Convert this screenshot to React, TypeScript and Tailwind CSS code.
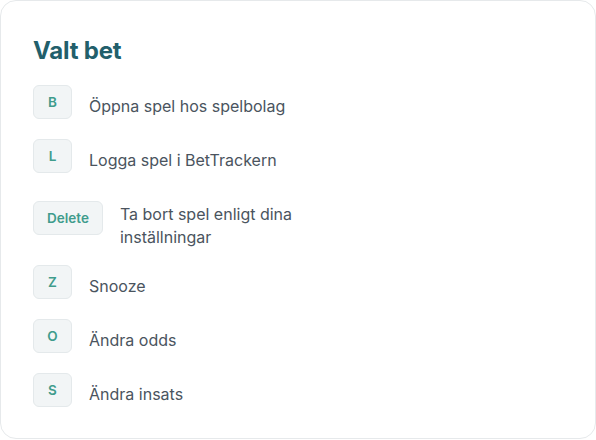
import React from "react";

type Row = { key: string; label: React.ReactNode; cls: string; textCls: string };

const rows: Row[] = [
  { key: "B", label: "Öppna spel hos spelbolag", cls: "", textCls: "pt-[9px]" },
  { key: "L", label: "Logga spel i BetTrackern", cls: "mt-5", textCls: "pt-[9px]" },
  {
    key: "Delete",
    label: (
      <>
        Ta bort spel enligt dina
        <br />
        inställningar
      </>
    ),
    cls: "mt-7",
    textCls: "pt-[2px] leading-[23px]",
  },
  { key: "Z", label: "Snooze", cls: "mt-4", textCls: "pt-[9px]" },
  { key: "O", label: "Ändra odds", cls: "mt-5", textCls: "pt-[9px]" },
  { key: "S", label: "Ändra insats", cls: "mt-5", textCls: "pt-[9px]" },
];

export default function App() {
  return (
    <div className="w-[596px] h-[440px] bg-white" style={{ fontFamily: "Inter, 'Noto Sans', sans-serif" }}>
      <div className="w-[596px] h-[439px] rounded-2xl border border-[#e6e9eb] bg-white px-8 pt-[34px]">
        <h1 className="text-[24px] leading-8 font-bold text-[#225f6b] tracking-[-0.2px]">Valt bet</h1>
        <div className="mt-[18px] flex flex-col">
          {rows.map((r) => (
            <div key={r.key} className={`flex items-start gap-[17px] ${r.cls}`}>
              <div className="h-[34px] min-w-[39px] px-[13px] flex items-center justify-center rounded-md border border-[#e4e9eb] bg-[#f2f5f6] text-[13.5px] font-semibold text-[#3f9c8c]">
                {r.key}
              </div>
              <div className={`text-[16px] leading-6 text-[#4a545e] ${r.textCls}`}>{r.label}</div>
            </div>
          ))}
        </div>
      </div>
    </div>
  );
}
